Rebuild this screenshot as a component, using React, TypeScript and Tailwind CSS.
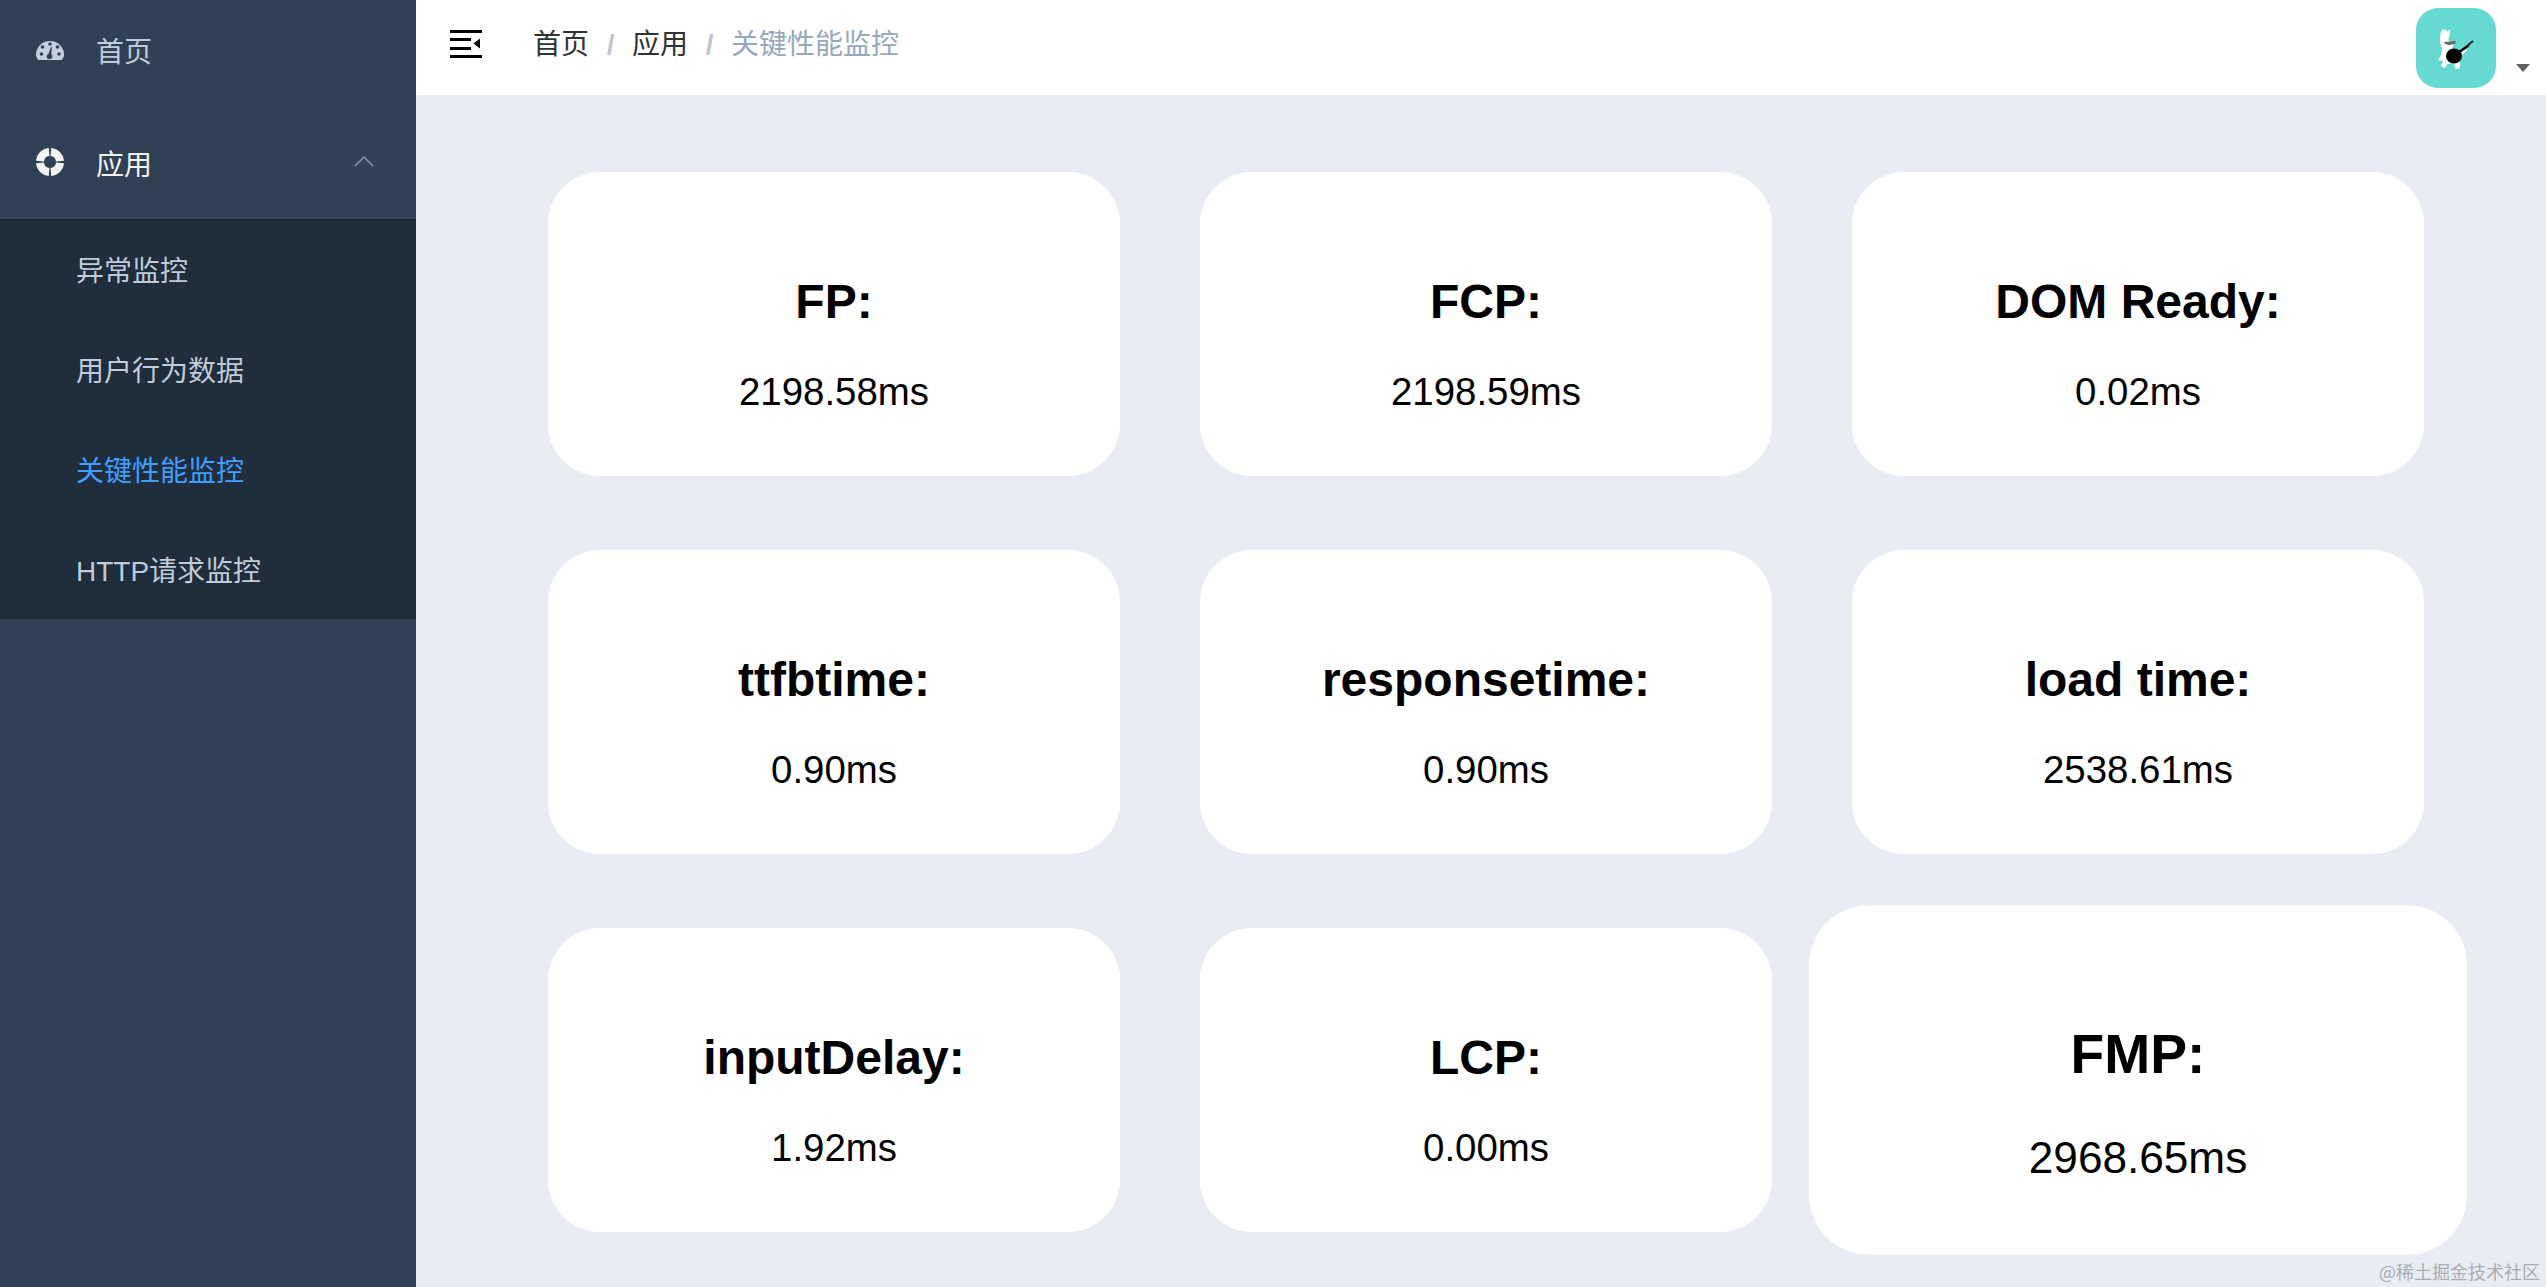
import React from "react";

type Metric = {
  title: string;
  value: string;
  large?: boolean;
};

const metrics: Metric[] = [
  { title: "FP:", value: "2198.58ms" },
  { title: "FCP:", value: "2198.59ms" },
  { title: "DOM Ready:", value: "0.02ms" },
  { title: "ttfbtime:", value: "0.90ms" },
  { title: "responsetime:", value: "0.90ms" },
  { title: "load time:", value: "2538.61ms" },
  { title: "inputDelay:", value: "1.92ms" },
  { title: "LCP:", value: "0.00ms" },
  { title: "FMP:", value: "2968.65ms", large: true },
];

const subMenu = ["异常监控", "用户行为数据", "关键性能监控", "HTTP请求监控"];

const FoldIcon = () => (
  <svg width="32" height="28" viewBox="0 0 32 28" fill="#000" className="mb-[8px]">
    <rect x="0" y="0" width="32" height="3" />
    <rect x="0" y="8" width="21" height="3" />
    <rect x="0" y="17" width="21" height="3" />
    <rect x="0" y="25" width="32" height="3" />
    <path d="M30 8.500v10l-6.500-5z" />
  </svg>
);

const GaugeIcon = () => (
  <svg width="28" height="19" viewBox="0 0 28 19" className="mr-[32px] mb-[6px]">
    <path
      d="M2.500 19C1 17.500 0 16 0 14a14 14 0 0 1 28 0c0 2-1 3.500-2.500 5z"
      fill="#c3cfde"
    />
    <g fill="#304156">
      <circle cx="5.500" cy="13" r="1.800" />
      <circle cx="6.500" cy="6" r="1.800" />
      <circle cx="14" cy="3" r="1.800" />
      <circle cx="21.500" cy="6" r="1.800" />
      <circle cx="23" cy="13" r="1.800" />
      <circle cx="13.500" cy="15.500" r="2.800" />
      <path d="M12 14l3-8 1 .3-1 9z" />
    </g>
  </svg>
);

const RingIcon = () => (
  <svg width="28" height="28" viewBox="0 0 28 28" className="mr-[32px] mb-[7px]">
    <circle
      cx="14"
      cy="14"
      r="10"
      fill="none"
      stroke="#f4f4f5"
      strokeWidth="8"
      pathLength="100"
      strokeDasharray="22 3"
      strokeDashoffset="-1.5"
    />
  </svg>
);

const Avatar = () => (
  <div className="w-[80px] h-[80px] rounded-[22px] bg-[#66d9d3]">
    <svg width="80" height="80" viewBox="0 0 80 80">
      <path
        d="M25 24c1-4 5-3 6 0 2-3 4-3 3 1-1 4-2 6-1 8l5 2-2 7 8 10v8l-4 1-3-6-6 1-2 4-4-2 2-5-5-1 3-5 1-7c-3-6-2-12-1-16z"
        fill="#fff"
      />
      <path d="M44 44l6-4 1 3-5 4z" fill="#fff" />
      <path d="M28 34l12-1-1 3-6 1-4-1z" fill="#6b6b6b" />
      <ellipse cx="38" cy="48" rx="8" ry="7.500" fill="#000" />
      <path d="M42 45l11-8" stroke="#000" strokeWidth="2.500" fill="none" />
      <path d="M52 37l5-4" stroke="#1a2a3a" strokeWidth="2" fill="none" />
    </svg>
  </div>
);

const Sidebar = () => (
  <aside className="w-[416px] shrink-0 bg-[#304156] font-['Liberation_Sans','Noto_Sans_CJK_SC',sans-serif] text-[28px]">
    <div className="h-[106px] flex items-center pl-[36px] text-[#bfcbd9]">
      <GaugeIcon />
      <span>首页</span>
    </div>
    <div className="mt-[2px] h-[111px] pt-[6px] border-b-2 border-[#37475c] flex items-center pl-[36px] pr-[42px] text-[#f4f4f5]">
      <RingIcon />
      <span>应用</span>
      <svg
        className="ml-auto mb-[10px]"
        width="20"
        height="12"
        viewBox="0 0 20 12"
        fill="none"
        stroke="#8b97a6"
        strokeWidth="1.5"
      >
        <path d="M1 11l9-9 9 9" />
      </svg>
    </div>
    <div className="bg-[#1f2d3d]">
      {subMenu.map((item) => (
        <div
          key={item}
          className={`h-[100px] pt-[6px] flex items-center pl-[76px] ${
            item === "关键性能监控" ? "text-[#409eff]" : "text-[#bfcbd9]"
          }`}
        >
          {item}
        </div>
      ))}
    </div>
  </aside>
);

const Header = () => (
  <header className="h-[95px] bg-white flex items-center pl-[34px] pr-[16px] text-[28px] font-['Liberation_Sans','Noto_Sans_CJK_SC',sans-serif]">
    <FoldIcon />
    <nav className="flex items-center ml-[51px] mb-[5px]">
      <span className="text-[#303133]">首页</span>
      <span className="w-[43px] text-center font-bold text-[#c0c4cc]">/</span>
      <span className="text-[#303133]">应用</span>
      <span className="w-[43px] text-center font-bold text-[#c0c4cc]">/</span>
      <span className="text-[#97a8be]">关键性能监控</span>
    </nav>
    <div className="ml-auto flex items-center">
      <Avatar />
      <div className="ml-[20px] mt-[40px] w-0 h-0 border-l-[7px] border-r-[7px] border-t-[8px] border-l-transparent border-r-transparent border-t-[#5f5f5f]" />
    </div>
  </header>
);

const MetricCard = ({ title, value, large }: Metric) => (
  <div
    className={`h-[304px] pt-[40px] bg-white rounded-[52px] flex flex-col items-center justify-center text-black ${
      large ? "scale-[1.15]" : ""
    }`}
  >
    <div className="text-[48px] leading-[56px] font-bold">{title}</div>
    <div className="mt-[40px] text-[38.4px] leading-[44px]">{value}</div>
  </div>
);

export default function App() {
  return (
    <div className="relative flex h-[1287px] overflow-hidden bg-[#e9edf3] font-['Liberation_Sans',sans-serif]">
      <Sidebar />
      <main className="flex-1 min-w-0">
        <Header />
        <div className="grid grid-cols-3 gap-x-[80px] gap-y-[74px] pl-[132px] pr-[122px] pt-[77px]">
          {metrics.map((metric) => (
            <MetricCard key={metric.title} {...metric} />
          ))}
        </div>
      </main>
      <div className="absolute right-[6px] bottom-[4px] text-[18px] leading-[24px] text-[#a9adb3] font-['Noto_Sans_CJK_SC',sans-serif]">
        @稀土掘金技术社区
      </div>
    </div>
  );
}
